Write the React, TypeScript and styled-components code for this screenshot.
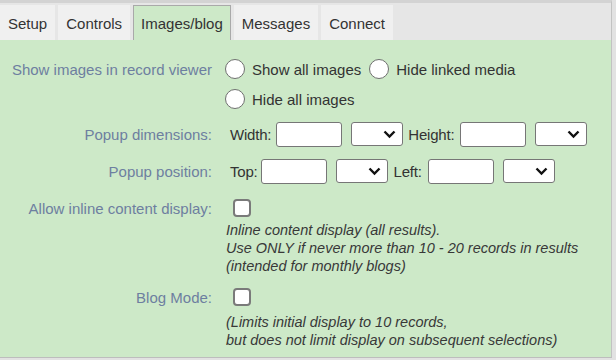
import React from "react";
import styled, { createGlobalStyle } from "styled-components";

const Global = createGlobalStyle`
  html, body { margin: 0; padding: 0; background: #e2e2e2; }
  body { font-family: "Liberation Sans", Arial, sans-serif; }
`;

const Page = styled.div`
  width: 611px;
  height: 354px;
  border-top: 3px solid #d3d3d3;
  border-right: 1px solid #c2c2c2;
  border-bottom: 1px solid #bdbdbd;
  background: #cde9c8;
  display: flex;
  flex-direction: column;
`;

const TabBar = styled.div`
  display: flex;
  gap: 3px;
  padding-top: 2px;
  height: 35px;
  background: #e6e6e6;
`;

const Tab = styled.div<{ $active?: boolean }>`
  box-sizing: border-box;
  height: 35px;
  padding: 0 ${(p) => (p.$active ? "7px" : "8px")};
  display: flex;
  align-items: center;
  font-size: 15px;
  color: #333;
  background: ${(p) => (p.$active ? "#cde9c8" : "#f0f0f0")};
  border: ${(p) => (p.$active ? "1px solid #a9a9a9" : "none")};
  border-bottom: none;
  padding-top: 1px;
`;

const Panel = styled.div`
  flex: 1;
  padding-top: 14px;
  display: flex;
  flex-direction: column;
`;

const Row = styled.div<{ $h: number; $mt?: number }>`
  display: flex;
  align-items: center;
  height: ${(p) => p.$h}px;
  margin-top: ${(p) => p.$mt ?? 0}px;
`;

const Label = styled.div`
  width: 212px;
  flex: none;
  text-align: right;
  font-size: 15px;
  color: #6d7fa0;
`;

const Content = styled.div`
  margin-left: 13px;
  display: flex;
  align-items: center;
  font-size: 15px;
  color: #333;
`;

const Radio = styled.span`
  box-sizing: border-box;
  width: 20px;
  height: 20px;
  border-radius: 50%;
  border: 1px solid #6f6f6f;
  background: #fff;
  margin-right: 7px;
  flex: none;
`;

const Option = styled.label`
  display: flex;
  align-items: center;
  margin-right: 8px;
`;

const Text = styled.span<{ $ml?: number }>`
  margin-left: ${(p) => p.$ml ?? 0}px;
  letter-spacing: -0.2px;
`;

const TextInput = styled.span<{ $ml: number }>`
  box-sizing: border-box;
  display: inline-block;
  width: 66px;
  height: 25px;
  border: 1px solid #767676;
  border-radius: 3px;
  background: #fff;
  margin-left: ${(p) => p.$ml}px;
`;

const Select = styled.span`
  box-sizing: border-box;
  display: inline-flex;
  align-items: center;
  justify-content: flex-end;
  width: 52px;
  height: 24px;
  border: 1px solid #767676;
  border-radius: 3px;
  background: #fff;
  margin-left: 9px;
  padding-right: 6px;
`;

const Check = styled.span`
  box-sizing: border-box;
  width: 18px;
  height: 18px;
  border: 2px solid #7a7a7a;
  border-radius: 4px;
  background: #fff;
  margin-left: 8px;
`;

const Note = styled.div<{ $mt: number }>`
  margin-left: 226px;
  margin-top: ${(p) => p.$mt}px;
  font-size: 14.5px;
  line-height: 18px;
  font-style: italic;
  color: #383838;
`;

const Chevron = () => (
  <svg width="13" height="9" viewBox="0 0 13 9">
    <polyline points="1.5,1.5 6.5,6.5 11.5,1.5" fill="none" stroke="#111" strokeWidth="2.4" />
  </svg>
);

const Dropdown = () => (
  <Select>
    <Chevron />
  </Select>
);

export default function App() {
  return (
    <>
      <Global />
      <Page>
        <TabBar>
          <Tab>Setup</Tab>
          <Tab>Controls</Tab>
          <Tab $active>Images/blog</Tab>
          <Tab>Messages</Tab>
          <Tab>Connect</Tab>
        </TabBar>
        <Panel>
          <Row $h={30}>
            <Label>Show images in record viewer</Label>
            <Content>
              <Option><Radio />Show all images</Option>
              <Option><Radio />Hide linked media</Option>
            </Content>
          </Row>
          <Row $h={30}>
            <Label />
            <Content>
              <Option><Radio />Hide all images</Option>
            </Content>
          </Row>
          <Row $h={34} $mt={3}>
            <Label>Popup dimensions:</Label>
            <Content>
              <Text $ml={5}>Width:</Text>
              <TextInput $ml={5} />
              <Dropdown />
              <Text $ml={5}>Height:</Text>
              <TextInput $ml={6} />
              <Dropdown />
            </Content>
          </Row>
          <Row $h={34} $mt={3}>
            <Label>Popup position:</Label>
            <Content>
              <Text $ml={5}>Top:</Text>
              <TextInput $ml={3} />
              <Dropdown />
              <Text $ml={6}>Left:</Text>
              <TextInput $ml={6} />
              <Dropdown />
            </Content>
          </Row>
          <Row $h={28} $mt={6}>
            <Label>Allow inline content display:</Label>
            <Content>
              <Check />
            </Content>
          </Row>
          <Note $mt={-1}>
            Inline content display (all results).
            <br />
            Use ONLY if never more than 10 - 20 records in results
            <br />
            (intended for monthly blogs)
          </Note>
          <Row $h={28} $mt={8}>
            <Label>Blog Mode:</Label>
            <Content>
              <Check />
            </Content>
          </Row>
          <Note $mt={2}>
            (Limits initial display to 10 records,
            <br />
            but does not limit display on subsequent selections)
          </Note>
        </Panel>
      </Page>
    </>
  );
}
